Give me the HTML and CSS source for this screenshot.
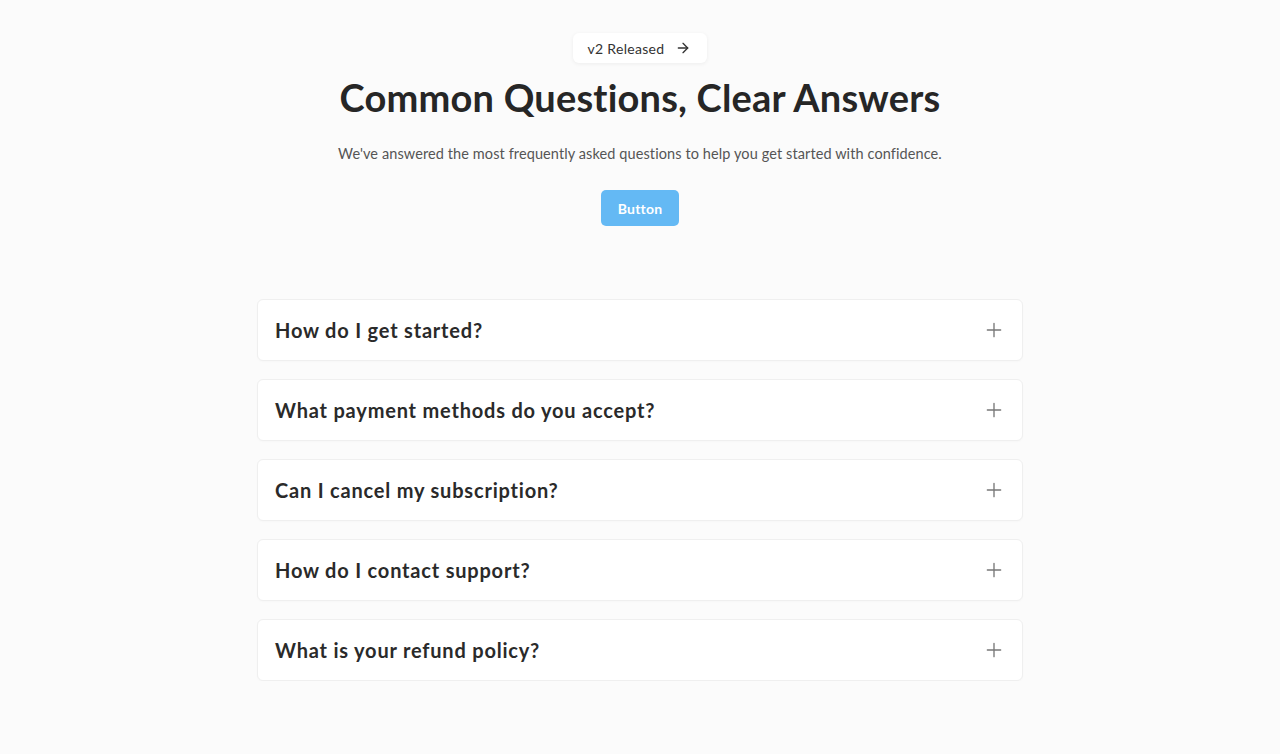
FILE: index.html
```html
<!DOCTYPE html>
<html lang="en">
<head>
    <meta charset="UTF-8">
    <meta name="viewport" content="width=device-width, initial-scale=1.0">
    <title>FAQ</title>
    <link rel="stylesheet" href="styles.css">
</head>
<body>
    <section class="hero">
        <a class="badge" href="#">
            v2 Released
            <svg class="badge-arrow" viewBox="0 0 24 24" width="16" height="16" fill="none" stroke="currentColor" stroke-width="2" stroke-linecap="round" stroke-linejoin="round">
                <path d="M5 12h14"/>
                <path d="M12 5l7 7-7 7"/>
            </svg>
        </a>
        <h1>Common Questions, Clear Answers</h1>
        <p class="lead">We've answered the most frequently asked questions to help you get started with confidence.</p>
        <button class="btn" type="button">Button</button>
    </section>

    <section class="faq">
        <div class="faq-item">
            <span class="faq-question">How do I get started?</span>
            <svg class="faq-icon" viewBox="0 0 24 24" width="20" height="20" fill="none" stroke="currentColor" stroke-width="1.6" stroke-linecap="round"><path d="M12 4v16M4 12h16"/></svg>
        </div>
        <div class="faq-item">
            <span class="faq-question">What payment methods do you accept?</span>
            <svg class="faq-icon" viewBox="0 0 24 24" width="20" height="20" fill="none" stroke="currentColor" stroke-width="1.6" stroke-linecap="round"><path d="M12 4v16M4 12h16"/></svg>
        </div>
        <div class="faq-item">
            <span class="faq-question">Can I cancel my subscription?</span>
            <svg class="faq-icon" viewBox="0 0 24 24" width="20" height="20" fill="none" stroke="currentColor" stroke-width="1.6" stroke-linecap="round"><path d="M12 4v16M4 12h16"/></svg>
        </div>
        <div class="faq-item">
            <span class="faq-question">How do I contact support?</span>
            <svg class="faq-icon" viewBox="0 0 24 24" width="20" height="20" fill="none" stroke="currentColor" stroke-width="1.6" stroke-linecap="round"><path d="M12 4v16M4 12h16"/></svg>
        </div>
        <div class="faq-item">
            <span class="faq-question">What is your refund policy?</span>
            <svg class="faq-icon" viewBox="0 0 24 24" width="20" height="20" fill="none" stroke="currentColor" stroke-width="1.6" stroke-linecap="round"><path d="M12 4v16M4 12h16"/></svg>
        </div>
    </section>
</body>
</html>
```

FILE: styles.css
```css
* {
    margin: 0;
    padding: 0;
    box-sizing: border-box;
}

body {
    font-family: Lato, "Noto Sans", sans-serif;
    color: #2a2a2a;
    background-color: #fbfbfb;
    padding-top: 33px;
}

.hero {
    display: flex;
    flex-direction: column;
    align-items: center;
}

.badge {
    display: inline-flex;
    align-items: center;
    gap: 11px;
    height: 30px;
    padding: 0 16px 0 15px;
    font-size: 14px;
    letter-spacing: 0.3px;
    color: #333;
    text-decoration: none;
    background-color: #fff;
    border-radius: 6px;
    box-shadow: 0 1px 4px rgba(0, 0, 0, 0.06);
}

.badge-arrow {
    color: #333;
}

h1 {
    margin-top: 11px;
    font-size: 38px;
    font-weight: 700;
    line-height: 46px;
    letter-spacing: 0.2px;
    color: #262626;
}

.lead {
    margin-top: 24px;
    font-size: 14.5px;
    line-height: 20px;
    letter-spacing: 0.1px;
    color: #555;
}

.btn {
    margin-top: 26px;
    height: 36px;
    padding: 0 17px;
    font-family: inherit;
    font-size: 14px;
    font-weight: 700;
    letter-spacing: 0.2px;
    color: #fff;
    background-color: #64b9f4;
    border: none;
    border-radius: 5px;
    cursor: pointer;
}

.faq {
    width: 766px;
    margin: 73px auto 0;
    display: flex;
    flex-direction: column;
    gap: 18px;
}

.faq-item {
    display: flex;
    align-items: center;
    justify-content: space-between;
    height: 62px;
    padding: 0 18px 0 17px;
    background-color: #fff;
    border: 1px solid #efefef;
    border-radius: 6px;
    box-shadow: 0 1px 2px rgba(0, 0, 0, 0.02);
}

.faq-question {
    font-size: 20px;
    font-weight: 700;
    letter-spacing: 0.8px;
    color: #2a2a2a;
}

.faq-icon {
    color: #777;
}
```
